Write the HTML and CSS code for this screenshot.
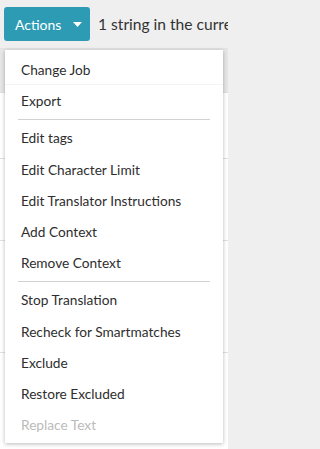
FILE: index.html
```html
<!DOCTYPE html>
<html lang="en">
<head>
<meta charset="utf-8">
<title>Actions menu</title>
<link rel="stylesheet" href="styles.css">
</head>
<body>
<div class="page">
  <div class="toolbar">
    <button class="actions-btn">Actions <svg class="caret" width="9" height="5" viewBox="0 0 9 5"><path d="M0 0h9L4.5 5z" fill="#fff"/></svg></button>
    <span class="summary">1 string in the current view is selected</span>
  </div>
  <div class="table">
    <div class="row head"></div>
    <div class="row r1"></div>
    <div class="row r2"></div>
    <div class="row r3"></div>
    <div class="row r4"></div>
  </div>
  <ul class="menu">
    <li class="item first">Change Job</li>
    <li class="item">Export</li>
    <li class="divider"></li>
    <li class="item">Edit tags</li>
    <li class="item">Edit Character Limit</li>
    <li class="item">Edit Translator Instructions</li>
    <li class="item">Add Context</li>
    <li class="item">Remove Context</li>
    <li class="divider"></li>
    <li class="item">Stop Translation</li>
    <li class="item">Recheck for Smartmatches</li>
    <li class="item">Exclude</li>
    <li class="item">Restore Excluded</li>
    <li class="item disabled">Replace Text</li>
  </ul>
</div>
</body>
</html>
```
FILE: styles.css
```css
html, body {
  margin: 0;
  padding: 0;
}
body {
  background: #efefef;
  font-family: Lato, "Liberation Sans", sans-serif;
  color: #333;
}
.page {
  position: relative;
  width: 228px;
  height: 449px;
  overflow: hidden;
}
.toolbar {
  display: flex;
  align-items: center;
  gap: 8px;
  padding: 5px 0 0 4px;
  height: 43px;
  box-sizing: border-box;
  white-space: nowrap;
}
.actions-btn {
  display: flex;
  align-items: center;
  gap: 12px;
  flex: none;
  width: 86px;
  height: 34px;
  padding: 0 0 0 11px;
  border: 0;
  border-radius: 3px;
  background: #2e9bb5;
  color: #fff;
  font-family: inherit;
  font-size: 14px;
  box-sizing: border-box;
}
.caret {
  display: block;
}
.summary {
  font-size: 15.6px;
  color: #333;
}
.table {
  margin-top: 5px;
  background: #fff;
  border-top: 1px solid #e2e2e2;
}
.row {
  border-bottom: 1px solid #e0e0e0;
}
.row.head {
  background: #e6e6e6;
  height: 43px;
}
.r1 { height: 65px; }
.r2 { height: 81px; }
.r3 { height: 111px; }
.r4 { height: 100px; border-bottom: 0; }
.menu {
  position: absolute;
  left: 5px;
  top: 50px;
  width: 218px;
  margin: 0;
  padding: 4px 0 3px;
  list-style: none;
  background: #fff;
  box-shadow: 0 1px 4px rgba(0, 0, 0, 0.28);
  box-sizing: border-box;
}
.item {
  height: 31.2px;
  line-height: 31.2px;
  padding: 0 16px;
  font-size: 13.7px;
  color: #2e2e2e;
  white-space: nowrap;
}
.item.first {
  box-shadow: inset 0 -1px 0 #f4f4f4;
}
.item.disabled {
  color: #bbb;
}
.divider {
  height: 1px;
  margin: 3px 13px 2px;
  background: #d2d2d2;
}
```
